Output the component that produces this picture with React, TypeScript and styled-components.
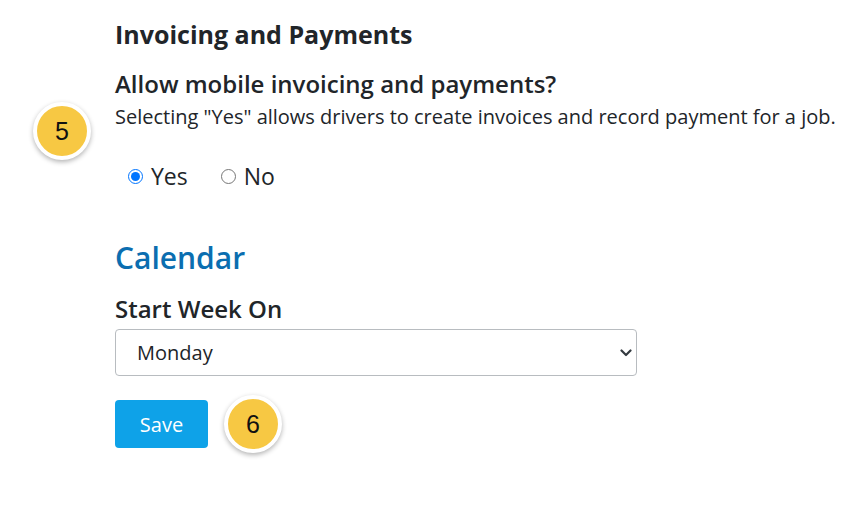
import React from "react";
import styled, { createGlobalStyle } from "styled-components";

const Global = createGlobalStyle`
  html, body { margin: 0; padding: 0; background: #fff; }
  body { font-family: "Open Sans", "Noto Sans", sans-serif; color: #212529; }
`;

const Page = styled.div`
  position: relative;
  width: 843px;
  height: 508px;
  padding: 17px 0 0 115px;
  box-sizing: border-box;
`;

const SectionTitle = styled.h2`
  margin: 0;
  font-size: 25px;
  font-weight: 700;
  line-height: 34px;
  color: #212529;
`;

const Question = styled.h3`
  margin: 17px 0 0;
  font-size: 24px;
  font-weight: 600;
  line-height: 32px;
  color: #212529;
`;

const Help = styled.p`
  margin: 3px 0 0;
  font-size: 20px;
  line-height: 28px;
  color: #212529;
  white-space: nowrap;
`;

const RadioRow = styled.div`
  display: flex;
  align-items: center;
  gap: 33px;
  margin: 29px 0 0 13px;
`;

const RadioLabel = styled.label`
  display: flex;
  align-items: center;
  gap: 8px;
  font-size: 23px;
  line-height: 32px;
  color: #212529;
`;

const Radio = styled.input`
  margin: 0;
  width: 15px;
  height: 15px;
  accent-color: #0075ff;
`;

const CalendarTitle = styled.h2`
  margin: 46px 0 0;
  font-size: 30px;
  font-weight: 600;
  line-height: 40px;
  color: #0b6eb0;
`;

const FieldLabel = styled.div`
  margin: 15px 0 0;
  font-size: 24px;
  font-weight: 600;
  line-height: 32px;
  color: #212529;
`;

const SelectBox = styled.div`
  position: relative;
  margin-top: 4px;
  width: 522px;
  height: 47px;
  box-sizing: border-box;
  border: 1px solid #b8bcc0;
  border-radius: 4px;
  display: flex;
  align-items: center;
  padding-left: 21px;
  font-size: 20px;
  color: #212529;
`;

const Chevron = styled.svg`
  position: absolute;
  right: 4px;
  top: 50%;
  margin-top: -5px;
`;

const ButtonRow = styled.div`
  display: flex;
  align-items: center;
  gap: 16px;
  margin-top: 19px;
`;

const SaveButton = styled.button`
  width: 93px;
  height: 48px;
  border: none;
  border-radius: 4px;
  background: #0ea2e8;
  color: #fff;
  font-family: "Open Sans", sans-serif;
  font-size: 20px;
  cursor: pointer;
`;

const Badge = styled.div`
  width: 50px;
  height: 50px;
  border-radius: 50%;
  background: #f7c843;
  border: 4px solid #fff;
  box-shadow: 0 2px 5px rgba(0, 0, 0, 0.3);
  display: flex;
  align-items: center;
  justify-content: center;
  font-family: "Liberation Sans", Arial, sans-serif;
  font-size: 25px;
  color: #111;
`;

const FloatingBadge = styled(Badge)`
  position: absolute;
  left: 33px;
  top: 102px;
`;

export default function App() {
  return (
    <>
      <Global />
      <Page>
        <FloatingBadge>5</FloatingBadge>
        <SectionTitle>Invoicing and Payments</SectionTitle>
        <Question>Allow mobile invoicing and payments?</Question>
        <Help>Selecting "Yes" allows drivers to create invoices and record payment for a job.</Help>
        <RadioRow>
          <RadioLabel>
            <Radio type="radio" name="mobile" defaultChecked />
            Yes
          </RadioLabel>
          <RadioLabel>
            <Radio type="radio" name="mobile" />
            No
          </RadioLabel>
        </RadioRow>
        <CalendarTitle>Calendar</CalendarTitle>
        <FieldLabel>Start Week On</FieldLabel>
        <SelectBox>
          Monday
          <Chevron width="12" height="10" viewBox="0 0 12 10">
            <path d="M1.5 2.5 L6 7 L10.5 2.5" fill="none" stroke="#343a40" strokeWidth="2.2" strokeLinecap="round" strokeLinejoin="round" />
          </Chevron>
        </SelectBox>
        <ButtonRow>
          <SaveButton>Save</SaveButton>
          <Badge>6</Badge>
        </ButtonRow>
      </Page>
    </>
  );
}
